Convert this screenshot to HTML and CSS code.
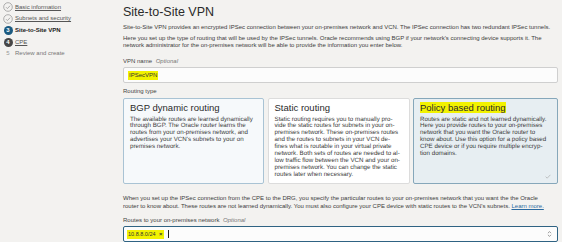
FILE: index.html
```html
<!DOCTYPE html>
<html lang="en">
<head>
    <meta charset="UTF-8">
    <title>Create IPSec Connection</title>
    <link rel="stylesheet" href="styles.css">
</head>
<body>
    <div class="wizard">
        <nav class="steps">
            <div class="step done">
                <svg class="step-check" viewBox="0 0 10 10"><circle cx="5" cy="5" r="4.3"/><path d="M3 5.2 L4.4 6.6 L7.1 3.7"/></svg>
                <a href="#">Basic information</a>
            </div>
            <div class="step done">
                <svg class="step-check" viewBox="0 0 10 10"><circle cx="5" cy="5" r="4.3"/><path d="M3 5.2 L4.4 6.6 L7.1 3.7"/></svg>
                <a href="#">Subnets and security</a>
            </div>
            <div class="step current">
                <span class="step-num">3</span>
                <span>Site-to-Site VPN</span>
            </div>
            <div class="step visited">
                <span class="step-num">4</span>
                <a href="#">CPE</a>
            </div>
            <div class="step todo">
                <span class="step-num">5</span>
                <span>Review and create</span>
            </div>
        </nav>

        <main class="content">
            <h1>Site-to-Site VPN</h1>
            <p class="intro">Site-to-Site VPN provides an encrypted IPSec connection between your on-premises network and VCN. The IPSec connection has two redundant IPSec tunnels.</p>
            <p class="intro">Here you set up the type of routing that will be used by the IPSec tunnels. Oracle recommends using BGP if your network's connecting device supports it. The network administrator for the on-premises network will be able to provide the information you enter below.</p>

            <div class="field">
                <label for="vpn-name">VPN name <em>Optional</em></label>
                <div class="text-input" id="vpn-name"><span class="mark">IPSecVPN</span></div>
            </div>

            <div class="field">
                <label>Routing type</label>
                <div class="cards">
                    <div class="card hover">
                        <div class="card-title">BGP dynamic routing</div>
                        <div class="card-text">The available routes are learned dynamically through BGP. The Oracle router learns the routes from your on-premises network, and advertises your VCN's subnets to your on premises network.</div>
                    </div>
                    <div class="card static">
                        <div class="card-title">Static routing</div>
                        <div class="card-text">Static routing requires you to manually pro&shy;vide the static routes for subnets in your on-premises network. These on-premises routes and the routes to subnets in your VCN de&shy;fines what is routable in your virtual private network. Both sets of routes are needed to al&shy;low traffic flow between the VCN and your on-premises network. You can change the static routes later when necessary.</div>
                    </div>
                    <div class="card selected">
                        <div class="card-title"><span class="mark">Policy based routing</span></div>
                        <div class="card-text">Routes are static and not learned dynamically. Here you provide routes to your on-premises network that you want the Oracle router to know about. Use this option for a policy based CPE device or if you require multiple encryp&shy;tion domains.</div>
                        <svg class="card-check" viewBox="0 0 10 8"><path d="M1 4.2 L3.6 6.8 L9 1.2"/></svg>
                    </div>
                </div>
            </div>

            <p class="intro routes-note">When you set up the IPSec connection from the CPE to the DRG, you specify the particular routes to your on-premises network that you want the the Oracle router to know about. These routes are not learned dynamically. You must also configure your CPE device with static routes to the VCN's subnets. <a href="#">Learn more.</a></p>

            <div class="field">
                <label for="routes">Routes to your on-premises network <em>Optional</em></label>
                <div class="text-input tags focused" id="routes">
                    <span class="tag mark">10.8.8.0/24 <b>&times;</b></span>
                    <span class="caret"></span>
                    <svg class="updown" viewBox="0 0 6 10"><path d="M1 4 L3 2 L5 4 M1 6 L3 8 L5 6"/></svg>
                </div>
                <div class="hint">Static routes to your on-premises network, for example 10.0.0.0/16.</div>
            </div>
        </main>
    </div>
</body>
</html>
```

FILE: styles.css
```css
body {
    margin: 0;
    background: #f3f2f0;
    font-family: "Liberation Sans", Arial, sans-serif;
    font-size: 6px;
    line-height: 7px;
    color: #333;
}

.wizard {
    display: flex;
    height: 242px;
    overflow: hidden;
}

/* left step list */
.steps {
    width: 123px;
    flex-shrink: 0;
    padding: 2px 0 0 3px;
    box-sizing: border-box;
    display: flex;
    flex-direction: column;
    gap: 1.7px;
}

.step {
    display: flex;
    align-items: center;
    gap: 2px;
    height: 10px;
    color: #555;
}

.step a {
    color: #555;
    text-decoration: underline;
}

.step-check {
    width: 10px;
    height: 10px;
    fill: none;
    stroke: #9a9a9a;
    stroke-width: 0.8;
}

.step-num {
    width: 9px;
    height: 9px;
    margin: 0 0.5px;
    border-radius: 50%;
    display: flex;
    align-items: center;
    justify-content: center;
    font-weight: bold;
    font-size: 6px;
    color: white;
}

.current {
    font-weight: bold;
    color: #222;
}

.current .step-num {
    background: #1b5a80;
}

.visited .step-num {
    background: #474747;
}

.todo {
    color: #777;
}

.todo .step-num {
    color: #999;
    font-weight: normal;
}

/* main column */
.content {
    flex: 1;
    padding: 4px 4px 0 0;
    min-width: 0;
}

h1 {
    margin: 0;
    font-size: 12.5px;
    line-height: 16px;
    font-weight: normal;
    color: #2a2a2a;
}

.intro {
    margin: 4px 0 0;
    color: #3c3c3c;
}

.field {
    margin-top: 9px;
}

.field label {
    display: block;
    color: #444;
    margin-bottom: 2px;
}

.field label em {
    color: #777;
    margin-left: 2px;
}

.text-input {
    height: 16px;
    box-sizing: border-box;
    background: #fcfcfc;
    border: 1px solid #cfcfcf;
    border-radius: 2px;
    padding: 0 4px;
    display: flex;
    align-items: center;
    color: #333;
}

.mark {
    background: #f2f200;
}

.text-input .mark {
    padding: 1px 1px;
}

.field + .field {
    margin-top: 5px;
}

.field + .field label {
    margin-bottom: 3px;
}

/* routing type cards */
.cards {
    display: grid;
    grid-template-columns: 141px 142px 1fr;
    gap: 3.5px;
}

.card {
    height: 86px;
    box-sizing: border-box;
    background: #fff;
    border: 1px solid #dcdcdc;
    border-radius: 2px;
    padding: 3px 6px 4px;
    display: flex;
    flex-direction: column;
}

.card.hover {
    background: #f6f9fb;
    border-color: #a9c3d4;
}

.card.static {
    padding-right: 8px;
}

.card.selected {
    background: #e7eef2;
    border-color: #86a7ba;
    padding-right: 10px;
}

.card-title {
    font-size: 9.5px;
    line-height: 11px;
    color: #2a2a2a;
    margin-bottom: 3.5px;
}

.card-text {
    color: #3c3c3c;
    font-size: 6.2px;
    line-height: 6.9px;
    text-rendering: geometricPrecision;
}

.card-check {
    width: 6px;
    height: 5px;
    margin-top: auto;
    align-self: flex-end;
    margin-right: -4px;
    fill: none;
    stroke: #999;
    stroke-width: 0.9;
}

.routes-note {
    margin-top: 11px;
    padding-right: 10px;
    line-height: 7.5px;
}

.routes-note a {
    color: #2b6aa0;
}

.routes-note + .field {
    margin-top: 7px;
}

.tags.focused {
    border: 1.5px solid #2f6383;
    padding: 0 3px;
}

.tag {
    font-size: 5.5px;
}

.tag b {
    margin-left: 2px;
    font-size: 6px;
}

.caret {
    width: 1px;
    height: 8px;
    background: #222;
    margin-left: 4px;
}

.updown {
    width: 5px;
    height: 8px;
    margin-left: auto;
    margin-right: 2px;
    fill: none;
    stroke: #666;
    stroke-width: 0.8;
}

.hint {
    margin-top: 2px;
    color: #999;
}
```
